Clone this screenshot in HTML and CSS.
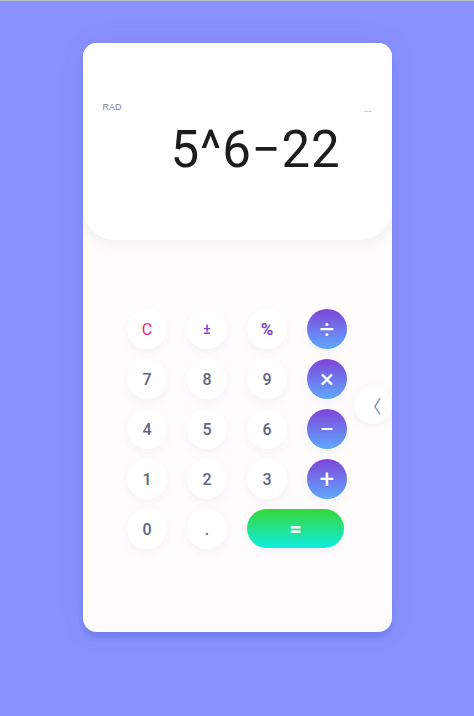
FILE: index.html
```html
<!DOCTYPE html>
<html>
<head>
<meta charset="utf-8">
<link rel="stylesheet" href="styles.css">
</head>
<body>
<div class="topline"></div>
<div class="stage">
  <div class="card">
    <div class="display">
      <div class="meta">
        <span class="mode">RAD</span>
        <span class="more">...</span>
      </div>
      <div class="expr">5^6−22</div>
    </div>
    <div class="keypad">
      <div class="grid">
        <button class="key clear">C</button>
        <button class="key fn">±</button>
        <button class="key fn pct">%</button>
        <button class="key op">÷</button>
        <button class="key">7</button>
        <button class="key">8</button>
        <button class="key">9</button>
        <button class="key op">×</button>
        <button class="key">4</button>
        <button class="key">5</button>
        <button class="key">6</button>
        <button class="key op">−</button>
        <button class="key">1</button>
        <button class="key">2</button>
        <button class="key">3</button>
        <button class="key op">+</button>
        <button class="key">0</button>
        <button class="key">.</button>
        <button class="key equals">=</button>
      </div>
      <button class="side">〈</button>
    </div>
  </div>
</div>
</body>
</html>
```

FILE: styles.css
```css
* { box-sizing: border-box; }
html, body { margin: 0; padding: 0; }
body {
  background: #8891fe;
  font-family: Roboto, "Liberation Sans", sans-serif;
  width: 474px;
  height: 716px;
  overflow: hidden;
}
.topline { height: 1px; background: #bdbdc4; }
.stage {
  padding-top: 42px;
  display: flex;
  justify-content: center;
}
.card {
  width: 309px;
  height: 589px;
  background: #fffdfc;
  border-radius: 14px;
  box-shadow: 0 6px 4px rgba(70, 80, 200, 0.2), 0 0 24px rgba(70, 80, 200, 0.12);
  overflow: hidden;
  display: flex;
  flex-direction: column;
}
.display {
  height: 197px;
  background: #ffffff;
  border-radius: 0 0 32px 32px;
  box-shadow: 0 6px 12px rgba(120, 110, 90, 0.08);
  padding: 59px 20px 0 20px;
  position: relative;
  z-index: 1;
}
.meta {
  display: flex;
  justify-content: space-between;
  align-items: flex-start;
  font-family: "Liberation Sans", Arial, sans-serif;
  font-size: 9px;
  color: #7d8296;
}
.more { margin-top: 2px; }
.expr {
  text-align: right;
  font-size: 51px;
  font-weight: 400;
  letter-spacing: 0.8px;
  color: #1c1c1c;
  line-height: 1;
  margin-top: 10px;
  padding-right: 31px;
}
.keypad {
  flex: 1;
  position: relative;
  display: flex;
  justify-content: center;
  padding-top: 69px;
}
.grid {
  display: grid;
  grid-template-columns: repeat(4, 40px);
  grid-auto-rows: 40px;
  column-gap: 20px;
  row-gap: 10px;
}
.key {
  width: 40px;
  height: 40px;
  border: none;
  border-radius: 50%;
  background: #ffffff;
  box-shadow: 0 4px 12px rgba(110, 100, 200, 0.08);
  font-family: Roboto, "Liberation Sans", sans-serif;
  font-size: 16px;
  font-weight: 500;
  color: #5f6380;
  display: flex;
  align-items: center;
  justify-content: center;
  padding: 0;
}
.clear { color: #fa1d77; font-weight: 400; }
.fn { color: #7a3fd5; font-size: 14px; }
.pct { font-size: 17px; font-weight: 700; }
.op {
  background: linear-gradient(180deg, #7f43d7 0%, #5ea9ff 100%);
  color: #ffffff;
  font-size: 26px;
  font-weight: 400;
}
.equals {
  grid-column: span 2;
  width: 97px;
  height: 39px;
  border-radius: 20px;
  background: linear-gradient(180deg, #36d837 0%, #10ece0 100%);
  color: #ffffff;
  font-size: 22px;
  font-weight: 700;
}
.side {
  position: absolute;
  right: 0;
  top: 146px;
  width: 38px;
  height: 38px;
  border: none;
  border-radius: 50%;
  background: #ffffff;
  box-shadow: 0 2px 10px rgba(110, 100, 150, 0.1);
  color: #7b86a8;
  font-size: 18px;
  padding: 0;
  display: flex;
  align-items: center;
  justify-content: center;
  font-family: "Noto Sans CJK SC", "DejaVu Sans", sans-serif;
}
```
